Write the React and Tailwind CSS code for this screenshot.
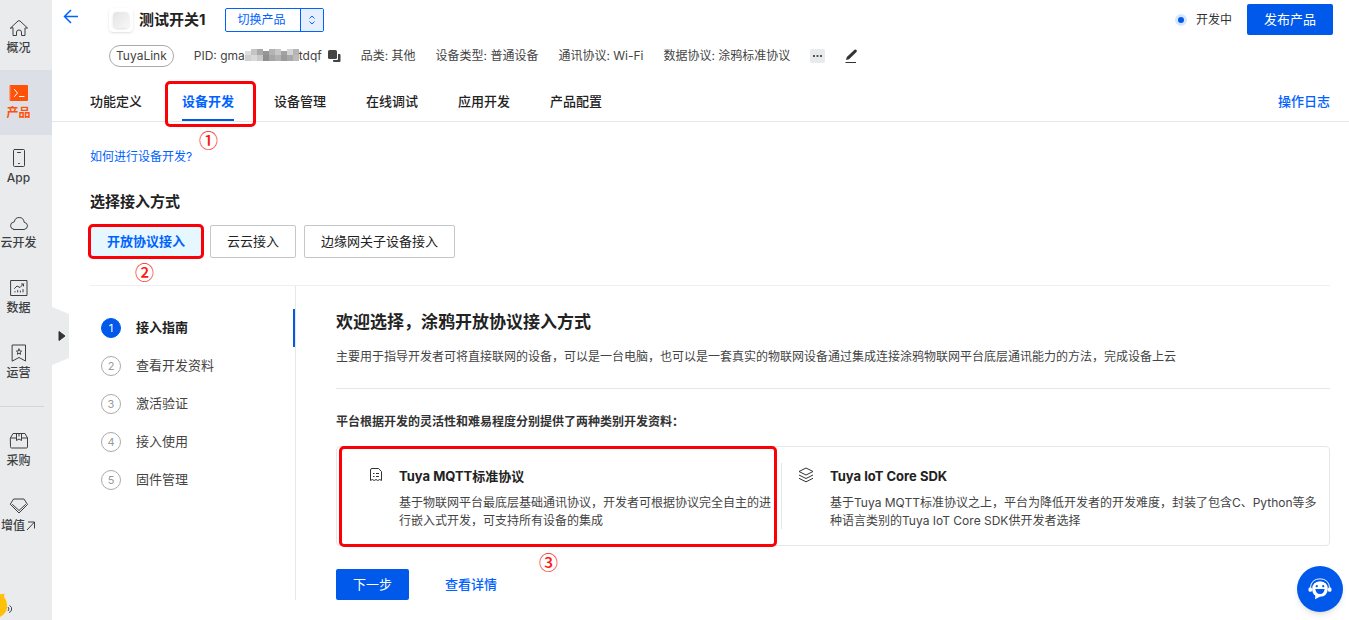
import React, { useState } from 'react';

const iconProps = {
  width: 20,
  height: 20,
  viewBox: '0 0 20 20',
  fill: 'none',
  stroke: 'currentColor',
  strokeWidth: 1,
  strokeLinejoin: 'round',
  strokeLinecap: 'round',
};

const HomeIcon = () => (
  <svg {...iconProps}>
    <path d="M1.500 10 L9 3 Q10 2.2 11 3 L18.500 10 H16 V17.500 H12.500 V14 Q12.500 12 10 12 Q7.500 12 7.500 14 V17.500 H4 V10 Z" />
  </svg>
);

const ProductIcon = () => (
  <svg {...iconProps}>
    <rect x="1.500" y="2.500" width="17" height="15" fill="#ff5209" stroke="#ff5209" />
    <path d="M5.500 6.500 L8.500 10 L5.500 13.500 M10.500 13.500 H15" stroke="#fff" />
  </svg>
);

const PhoneIcon = () => (
  <svg {...iconProps}>
    <rect x="4.500" y="1.500" width="11" height="17" rx="1" />
    <path d="M8.500 4.500 H11.500 M9.500 15.500 H10.500" />
  </svg>
);

const CloudIcon = () => (
  <svg {...iconProps}>
    <path d="M5 16.500 H15 Q18.500 16 18.500 12.800 Q18.300 9.800 15.200 9.300 Q14.500 4.500 10.200 4.500 Q6 4.500 5.300 8.800 Q1.500 9.300 1.500 12.800 Q1.700 16 5 16.500 Z" />
  </svg>
);

const ChartIcon = () => (
  <svg {...iconProps}>
    <rect x="2" y="2.500" width="16" height="15" />
    <path d="M5.500 10.500 L8 8 L11 9.500 L14.500 6 M12.500 6 H14.500 V8 M6 13.500 V14 M8.700 12.500 V14 M11.400 13 V14 M14 11.500 V14" />
  </svg>
);

const BookmarkIcon = () => (
  <svg {...iconProps}>
    <path d="M3.500 2 H16.500 V18 L10 14.500 L3.500 18 Z" />
    <path d="M10 6 L10.800 7.900 L12.600 8.100 L11.200 9.400 L11.600 11.300 L10 10.300 L8.400 11.300 L8.800 9.400 L7.400 8.100 L9.200 7.900 Z" />
  </svg>
);

const BoxIcon = () => (
  <svg {...iconProps}>
    <path d="M1.500 7 L4 2.500 H16 L18.500 7 V16 Q18.500 17 17.500 17 H2.500 Q1.500 17 1.500 16 Z M1.500 7 H7.500 M12.500 7 H18.500 M7.500 2.500 V9.500 L10 8 L12.500 9.500 V2.500 M10 2.500 V5" />
  </svg>
);

const DiamondIcon = () => (
  <svg {...iconProps}>
    <path d="M5 3 H15 L18.500 8.500 L10 17 L1.500 8.500 Z" />
    <path d="M3.500 8.500 L10 14.500 L16.500 8.500" />
  </svg>
);

const navItems = [
  { label: '概况', icon: HomeIcon },
  { label: '产品', icon: ProductIcon, active: true },
  { label: 'App', icon: PhoneIcon },
  { label: '云开发', icon: CloudIcon },
  { label: '数据', icon: ChartIcon },
  { label: '运营', icon: BookmarkIcon },
];

const moreItems = [
  { label: '采购', icon: BoxIcon },
  { label: '增值', icon: DiamondIcon, external: true },
];

const tabs = ['功能定义', '设备开发', '设备管理', '在线调试', '应用开发', '产品配置'];
const accessModes = ['开放协议接入', '云云接入', '边缘网关子设备接入'];
const steps = ['接入指南', '查看开发资料', '激活验证', '接入使用', '固件管理'];

const NavItem = ({ label, icon: Icon, active, external }) => (
  <a
    href="#"
    className={`flex h-[65px] flex-col items-center pt-[13px] pr-[15px] whitespace-nowrap ${
      active ? 'bg-[#dddfe6] text-[#ff5209]' : 'text-[#3d3f43]'
    }`}
  >
    <Icon />
    <span className={`flex items-center text-xs leading-5 ${active ? 'font-bold' : 'font-medium'}`}>
      {label}
      {external && (
        <svg width="11" height="12" viewBox="0 0 11 12" fill="none" stroke="currentColor">
          <path d="M3 2 H9.500 V8.500 M9.500 2 L2 10" />
        </svg>
      )}
    </span>
  </a>
);

const Sidebar = () => (
  <aside className="relative w-[52px] shrink-0 bg-[#e9ebed]">
    <nav className="pt-[5px]">
      {navItems.map((item) => (
        <NavItem key={item.label} {...item} />
      ))}
      <hr className="mt-[11px] mr-2 mb-[11px] border-[#d3d5d8]" />
      {moreItems.map((item) => (
        <NavItem key={item.label} {...item} />
      ))}
    </nav>

    <button type="button" aria-label="展开菜单" className="absolute top-[307px] left-full z-10">
      <svg width="17" height="58" viewBox="0 0 17 58">
        <path d="M0 0 L17 7 V51 L0 58 Z" fill="#e9ebed" />
        <path d="M7 24.500 L13 29 L7 33.500 Z" fill="#333" stroke="#333" strokeLinejoin="round" />
      </svg>
    </button>

    {/* mascot peeking from the corner */}
    <svg className="absolute bottom-0 left-0" width="16" height="28" viewBox="0 0 16 28">
      <path d="M0 2 Q2 2.500 4.500 1.500 L4 5 Q7.500 9 7 16 Q6 22 0 25 Z" fill="#ffc107" />
      <path d="M8 15 Q10 17 8 19 M9.500 13.500 Q12.500 15 11.500 18 Q11 20 9 20.500" fill="none" stroke="#444" />
    </svg>
  </aside>
);

// Red frame laid over a highlighted element
const Frame = ({ className }) => (
  <span className={`pointer-events-none absolute z-10 rounded-[5px] border-3 border-[#fb0007] ${className}`} />
);

const Mark = ({ children, className }) => (
  <span
    className={`absolute font-['Noto_Sans_CJK_SC',sans-serif] text-[19px] leading-5 font-medium text-[#fb1a10] ${className}`}
  >
    {children}
  </span>
);

const mosaic = [
  ['#dedede', '#cfcfcf'], ['#c4c4c4', '#d8d8d8'], ['#a9a9a9', '#c9c9c9'], ['#959595', '#8f8f8f'],
  ['#b3b3b3', '#a6a6a6'], ['#c6c6c6', '#b1b1b1'], ['#a2a2a2', '#9b9b9b'], ['#d4d4d4', '#a8a8a8'],
  ['#b5b5b5', '#bcbcbc'],
];

const MaskedPid = () => (
  <span className="flex items-center">
    PID: gma
    <svg width="54" height="14" viewBox="0 0 54 14" aria-hidden="true">
      {mosaic.map(([top, bottom], i) => (
        <g key={i}>
          <rect x={i * 6} y={i % 3 === 0 ? 2 : 0} width="6" height="7" fill={top} />
          <rect x={i * 6} y="6" width="6" height="6" fill={bottom} />
        </g>
      ))}
    </svg>
    tdqf
    <button type="button" aria-label="复制 PID" className="ml-1.5">
      <svg width="13" height="13" viewBox="0 0 13 13">
        <rect x="0" y="0" width="9" height="9" rx="1.500" fill="#444" />
        <path d="M10 4 H11.500 Q12.500 4 12.500 5 V11 Q12.500 12 11.500 12 H6 Q5 12 5 11 V10 H9 Q10 10 10 9 Z" fill="#444" />
      </svg>
    </button>
  </span>
);

const Header = ({ tab, setTab }) => (
  <header className="border-b border-[#e6e7e9]">
    <div className="flex items-center pt-1 pr-4 pl-[11px]">
      <button type="button" aria-label="返回" className="mb-[7px] text-[#0062ff]">
        <svg width="15" height="15" viewBox="0 0 15 15" fill="none" stroke="currentColor" strokeWidth="1.5">
          <path d="M8 1 L1.500 7.500 L8 14 M1.500 7.500 H15" />
        </svg>
      </button>
      <span className="ml-[31px] flex size-6 items-center justify-center rounded-sm bg-white shadow">
        <span className="size-4 rounded bg-linear-to-br from-[#e4e4e4] to-[#f7f7f7] shadow-sm" />
      </span>
      <h1 className="ml-1.5 text-[15px] leading-6 font-bold text-[#222]">测试开关1</h1>
      <div className="ml-5 flex h-6 rounded-xs border border-[#0062ff] text-xs text-[#0062ff]">
        <button type="button" className="w-[74px] pr-1">切换产品</button>
        <button type="button" aria-label="选择产品" className="flex w-[23px] items-center justify-center border-l border-[#0062ff] bg-[#e8effc]">
          <svg width="8" height="10" viewBox="0 0 8 10" fill="none" stroke="currentColor">
            <path d="M1.500 3.500 L4 1 L6.500 3.500 M1.500 6.500 L4 9 L6.500 6.500" />
          </svg>
        </button>
      </div>
      <span className="mr-[15px] ml-auto flex items-center gap-[9px] text-xs text-[#333]">
        <i className="size-3 rounded-full border-3 border-[#d6e6ff] bg-[#0059ea]" />
        开发中
      </span>
      <button type="button" className="h-[31px] w-[86px] rounded-xs bg-[#0059ea] text-[13px] text-white">
        发布产品
      </button>
    </div>

    <div className="mt-2.5 flex h-[22px] items-center gap-5 pl-[57px] text-xs whitespace-nowrap text-[#444]">
      <span className="flex h-[22px] items-center rounded-full border border-[#aaa] px-1.5">TuyaLink</span>
      <MaskedPid />
      <span>品类: 其他</span>
      <span>设备类型: 普通设备</span>
      <span>通讯协议: Wi-Fi</span>
      <span>数据协议: 涂鸦标准协议</span>
      <button type="button" aria-label="更多" className="flex h-3.5 w-[15px] items-center justify-center rounded-xs bg-[#e9eaec]">
        <svg width="9" height="2" viewBox="0 0 9 2" fill="#555">
          <path d="M0 0 H2 V2 H0 Z M3.500 0 H5.500 V2 H3.500 Z M7 0 H9 V2 H7 Z" />
        </svg>
      </button>
      <button type="button" aria-label="编辑">
        <svg width="13" height="14" viewBox="0 0 13 14">
          <path d="M1 11 L1.800 8 L9.500 0.800 Q10.500 0 11.500 1 Q12.300 2 11.500 3 L4 10.200 Z" fill="#333" />
          <path d="M0.500 13.500 H11" stroke="#333" />
        </svg>
      </button>
    </div>

    <div className="mt-3.5 flex items-stretch justify-between pr-[19px] pl-[38px] text-[13px]">
      <nav className="flex gap-10">
        {tabs.map((name) => (
          <button
            key={name}
            type="button"
            onClick={() => setTab(name)}
            className={`relative h-10 border-b-2 pt-1 ${
              tab === name ? 'border-[#0059ea] font-bold text-[#0062ff]' : 'border-transparent font-medium text-[#222]'
            }`}
          >
            {name}
            {name === '设备开发' && (
              <>
                <Frame className="top-0 -right-[22px] -bottom-2 -left-[17px]" />
                <Mark className="top-[49px] left-[17px]">①</Mark>
              </>
            )}
          </button>
        ))}
      </nav>
      <a href="#" className="flex items-center pt-0.5 font-medium text-[#0062ff]">操作日志</a>
    </div>
  </header>
);

const Steps = () => (
  <ol className="w-[205px] shrink-0 pt-[23px] text-[13px] text-[#444]">
    {steps.map((step, i) => (
      <li
        key={step}
        className={`flex h-[38px] items-center border-r-2 pl-[11px] ${
          i === 0 ? 'border-[#0059ea] font-bold text-[#222]' : 'border-transparent'
        }`}
      >
        <span
          className={`mr-[15px] flex size-5 items-center justify-center rounded-full border text-[11px] font-normal ${
            i === 0 ? 'border-[#0059ea] bg-[#0059ea] text-white' : 'border-[#aaa] text-[#999]'
          }`}
        >
          {i + 1}
        </span>
        {step}
      </li>
    ))}
  </ol>
);

const Guide = () => (
  <section className="flex-1 border-l border-[#e6e7e9] pt-6 pl-10 text-[#222]">
    <h2 className="text-[17px] leading-6 font-bold">欢迎选择，涂鸦开放协议接入方式</h2>
    <p className="mt-[13px] text-xs leading-5 text-[#444]">
      主要用于指导开发者可将直接联网的设备，可以是一台电脑，也可以是一套真实的物联网设备通过集成连接涂鸦物联网平台底层通讯能力的方法，完成设备上云
    </p>
    <hr className="mt-[21px] border-[#e6e7e9]" />
    <h3 className="mt-[23px] text-xs leading-5 font-bold text-[#333]">
      平台根据开发的灵活性和难易程度分别提供了两种类别开发资料：
    </h3>

    <div className="relative mt-3.5 flex h-[100px] rounded-sm border border-[#e6e7e9]">
      <Frame className="-top-px right-[552px] -bottom-0.5 left-0.5" />
      <Mark className="top-[105px] left-[202px]">③</Mark>
      <article className="flex flex-1 pt-[18px] pr-1 pl-8">
        <svg className="mt-0.5 mr-4 shrink-0" width="14" height="16" viewBox="0 0 14 16" fill="none" stroke="#333">
          <path d="M1.500 13.500 V3 Q1.500 1.500 3 1.500 H9.500 L12.500 4.500 V13.500 L10.700 12.500 L8.800 13.500 L7 12.500 L5.200 13.500 L3.300 12.500 Z" />
          <path d="M4 6.500 H5.500 M7 6.500 H10 M4 9.500 H5.500 M7 9.500 H10" />
        </svg>
        <div>
          <h4 className="text-[13px] leading-[22px] font-bold">Tuya MQTT标准协议</h4>
          <p className="mt-[7px] text-xs leading-[18px] text-[#444]">
            基于物联网平台最底层基础通讯协议，开发者可根据协议完全自主的进行嵌入式开发，可支持所有设备的集成
          </p>
        </div>
      </article>
      <article className="flex w-[548px] shrink-0 pr-3">
        <i className="my-4 w-px shrink-0 bg-[#e6e7e9]" />
        <svg className="mt-5 mr-4 ml-4 shrink-0" width="16" height="16" viewBox="0 0 16 16" fill="none" stroke="#333">
          <path d="M8 1 L15 4.500 L8 8 L1 4.500 Z M1 8 L8 11.500 L15 8 M1 11.300 L8 14.800 L15 11.300" />
        </svg>
        <div className="pt-[18px]">
          <h4 className="text-[13px] leading-[22px] font-bold">Tuya IoT Core SDK</h4>
          <p className="mt-[7px] text-xs leading-[18px] text-[#444]">
            基于Tuya MQTT标准协议之上，平台为降低开发者的开发难度，封装了包含C、Python等多种语言类别的Tuya IoT Core SDK供开发者选择
          </p>
        </div>
      </article>
    </div>

    <div className="mt-[23px] flex items-center gap-9 text-[13px]">
      <button type="button" className="h-[31px] w-[73px] rounded-xs bg-[#0059ea] text-white">下一步</button>
      <a href="#" className="font-medium text-[#0062ff]">查看详情</a>
    </div>
  </section>
);

const ChatButton = () => (
  <button
    type="button"
    aria-label="在线客服"
    className="fixed right-1.5 bottom-2 flex size-[46px] items-center justify-center rounded-full bg-[#0059ea] shadow-md"
  >
    <svg width="26" height="24" viewBox="0 0 28 26" fill="none">
      <path d="M3.500 12 Q4.500 2 14 2 Q23.500 2 24.500 12" stroke="#fff" strokeWidth="1" />
      <rect x="1.500" y="11" width="4" height="5" rx="2" fill="#fff" />
      <rect x="22.500" y="11" width="4" height="5" rx="2" fill="#fff" />
      <path d="M14 4.500 Q22.500 5 22.500 13 Q22 21 14 21.500 L8.500 24 L9 20.300 Q5.500 18 5.500 13 Q5.500 5 14 4.500 Z" fill="#fff" />
      <circle cx="10.500" cy="10" r="1.200" fill="#0059ea" />
      <circle cx="17.500" cy="10" r="1.200" fill="#0059ea" />
      <path d="M9 13 H19 Q18.500 18.500 14 18.500 Q9.500 18.500 9 13 Z" fill="#0059ea" />
    </svg>
  </button>
);

const App = () => {
  const [tab, setTab] = useState('设备开发');
  const [mode, setMode] = useState('开放协议接入');

  return (
    <div className="flex min-h-screen bg-white font-[Inter,'Noto_Sans_CJK_SC',sans-serif]">
      <Sidebar />
      <div className="min-w-0 flex-1">
        <Header tab={tab} setTab={setTab} />
        <main className="pr-[19px] pl-[38px]">
          <a href="#" className="mt-[25px] block w-fit text-xs leading-5 text-[#0062ff]">如何进行设备开发?</a>
          <h2 className="mt-[23px] text-[15px] leading-6 font-bold text-[#222]">选择接入方式</h2>
          <div className="mt-[11px] flex gap-2 text-[13px]">
            {accessModes.map((name) => (
              <button
                key={name}
                type="button"
                onClick={() => setMode(name)}
                className={`relative h-[33px] rounded-xs border px-4 ${
                  mode === name
                    ? 'border-[#0062ff] bg-[#e6f7ff] font-bold text-[#0062ff]'
                    : 'border-[#c4c6c9] text-[#222]'
                }`}
              >
                {name}
                {name === '开放协议接入' && (
                  <>
                    <Frame className="-inset-x-[3px] -inset-y-0.5" />
                    <Mark className="top-9 left-11">②</Mark>
                  </>
                )}
              </button>
            ))}
          </div>
          <div className="mt-[27px] flex border-t border-[#eeeff0]">
            <Steps />
            <Guide />
          </div>
        </main>
      </div>
      <ChatButton />
    </div>
  );
};

export default App;
